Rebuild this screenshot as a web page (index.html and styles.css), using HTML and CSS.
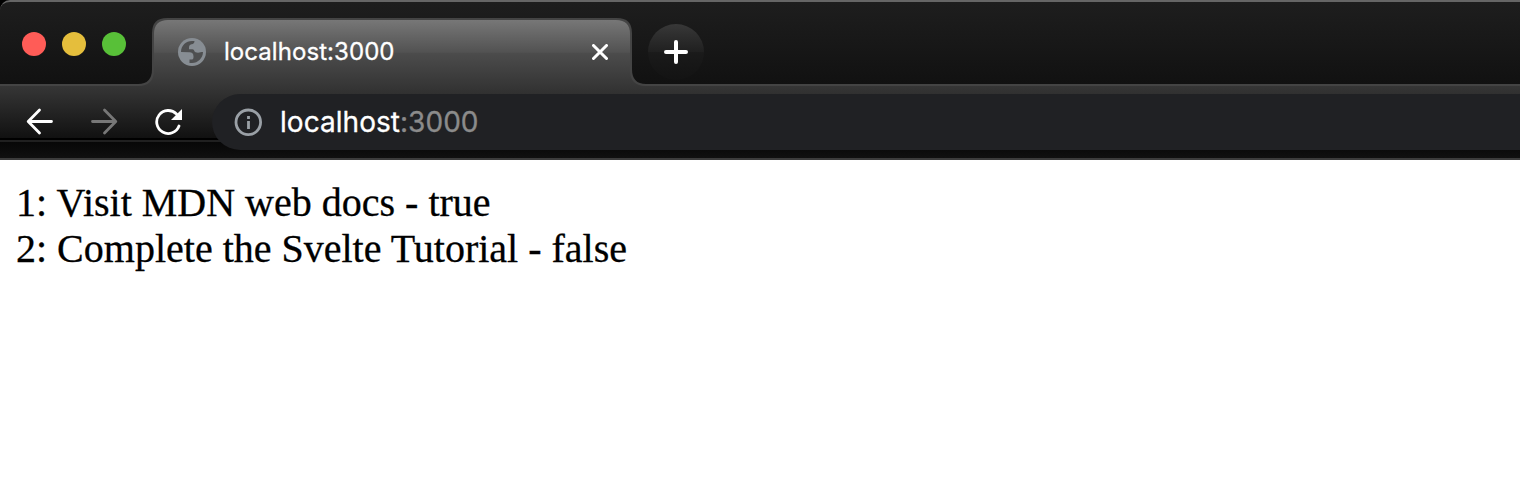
FILE: index.html
```html
<!DOCTYPE html>
<html lang="en">
<head>
<meta charset="utf-8">
<title>localhost:3000</title>
<link rel="stylesheet" href="styles.css">
</head>
<body>
<div class="window">
  <header class="tabstrip">
    <div class="lights">
      <span class="light close"></span>
      <span class="light minimize"></span>
      <span class="light maximize"></span>
    </div>
    <div class="tab">
      <svg class="tab-shape" width="520" height="68" viewBox="0 0 520 68">
        <defs>
          <linearGradient id="tabfill" x1="0" y1="0" x2="0" y2="1">
            <stop offset="0" stop-color="#777"/>
            <stop offset=".49" stop-color="#525252"/>
            <stop offset=".5" stop-color="#4c4c4c"/>
            <stop offset="1" stop-color="#363636"/>
          </linearGradient>
        </defs>
        <path fill="#444" d="M0 66H4Q18 66 18 51V15Q18 0 33 0H483Q498 0 498 15V51Q498 66 512 66H520V68H0Z"/>
        <path fill="url(#tabfill)" d="M4 68Q20 68 20 52V16Q20 2 34 2H482Q496 2 496 16V52Q496 68 512 68Z"/>
      </svg>
      <svg class="globe" width="28" height="28" viewBox="0 0 28 28">
        <circle cx="14" cy="14" r="14" fill="#878d93"/>
        <path fill="#4e4f50" d="M3 14C3 7.500 8 3 14 3H16.500C16.500 5 15.500 6.200 13.500 6.200C11.500 6.500 11 8 11 9.500V11.300H14.500C15.500 11.300 16 12 16.300 13C16.800 14.300 18 14.700 20 14.700C22 14.700 23 14 25 14C25 20 20 25 14 25H11.500V21.500H14C15.200 21.500 15.500 20.500 15.500 18.500C15.500 15.500 14 14.300 11.500 14.300Z"/>
      </svg>
      <span class="tab-title">localhost:3000</span>
      <svg class="tab-close" width="16" height="16" viewBox="0 0 16 16"><path d="M1.500 1.500L14.500 14.500M14.500 1.500L1.500 14.500"/></svg>
    </div>
    <div class="new-tab">
      <svg width="24" height="24" viewBox="0 0 24 24"><path d="M12 2V22M2 12H22"/></svg>
    </div>
  </header>
  <nav class="toolbar">
    <svg class="nav-icon" width="28" height="28" viewBox="0 0 28 28"><path d="M25.500 13.500H2.500M13.500 2L2.200 13.500L13.500 25"/></svg>
    <svg class="nav-icon forward" width="28" height="28" viewBox="0 0 28 28"><path d="M2.500 13.500H25.500M14.500 2L25.800 13.500L14.500 25"/></svg>
    <svg class="nav-icon" width="28" height="28" viewBox="0 0 28 28"><path d="M22.500 6A11.500 11.500 0 1 0 25 18"/><path class="solid" d="M28 1V12H17Z"/></svg>
    <div class="address">
      <svg class="info" width="28" height="28" viewBox="0 0 28 28"><circle cx="14.300" cy="14.300" r="12.300"/><path d="M14.500 8V11M14.500 13V21"/></svg>
      <span class="url">localhost<span class="port">:3000</span></span>
    </div>
  </nav>
  <main class="page">
    <div>1: Visit MDN web docs - true</div>
    <div>2: Complete the Svelte Tutorial - false</div>
  </main>
</div>
</body>
</html>
```

FILE: styles.css
```css
* { box-sizing: border-box; }
body { margin: 0; background: #000; overflow: hidden; }
.window { height: 500px; display: flex; flex-direction: column; }
.tabstrip {
  height: 86px;
  display: flex;
  background: linear-gradient(#1e1e1e, #111);
  border-top: 2px solid #666;
  border-bottom: 2px solid #444;
  border-top-left-radius: 10px;
}
.lights { width: 152px; display: flex; gap: 16px; padding: 30px 0 0 22px; }
.light { width: 24px; height: 24px; border-radius: 50%; }
.close { background: #ff5c57; }
.minimize { background: #e5be3c; }
.maximize { background: #58c038; }
.tab {
  position: relative;
  width: 480px;
  height: 68px;
  margin-top: 16px;
  padding: 0 24px 0 26px;
  display: flex;
  align-items: center;
}
.tab-shape { position: absolute; left: -18px; top: 0; }
.globe, .tab-title, .tab-close { position: relative; }
.tab-title {
  flex: 1;
  margin-left: 18px;
  font: 24px/30px Inter, "Liberation Sans", sans-serif;
  letter-spacing: 0.06px;
  color: #fff;
  -webkit-text-stroke: 0.3px #fff;
}
.tab-close { fill: none; stroke: #fff; stroke-width: 3; stroke-linecap: round; }
.new-tab {
  width: 56px;
  height: 56px;
  margin: 22px 0 0 16px;
  border-radius: 50%;
  display: grid;
  place-items: center;
  background: linear-gradient(#383838, #202020 49%, #1a1a1a 51%, #131313);
}
.new-tab svg { fill: none; stroke: #fff; stroke-width: 4; stroke-linecap: round; }
.toolbar {
  height: 74px;
  display: flex;
  padding: 8px 0 0 26px;
  gap: 36px;
  background: linear-gradient(#363636 0, #111 52px, #000 52px, #000 54px, #202020 54px, #202020 56px, #070707 56px, #101010 72px);
  border-bottom: 2px solid #3c3c3c;
}
.nav-icon { margin-top: 14px; fill: none; stroke: #fff; stroke-width: 2.8; stroke-linecap: round; stroke-linejoin: round; }
.forward { stroke: #777; }
.nav-icon .solid { fill: #fff; stroke: none; }
.address {
  flex: 1;
  height: 56px;
  margin-left: -6px;
  padding-left: 22px;
  display: flex;
  align-items: center;
  gap: 18px;
  border-radius: 28px 0 0 28px;
  background: #202124;
}
.info { fill: none; stroke: #9aa0a6; stroke-width: 2.8; }
.url {
  font: 28px/34px Inter, "Liberation Sans", sans-serif;
  letter-spacing: 0.04px;
  color: #fff;
  -webkit-text-stroke: 0.3px;
}
.port { color: #8b8b8b; }
.page {
  flex: 1;
  padding: 20px 16px;
  background: #fff;
  color: #000;
  font: 40px/46px "Liberation Serif", serif;
  -webkit-text-stroke: 0.3px #000;
}
```
